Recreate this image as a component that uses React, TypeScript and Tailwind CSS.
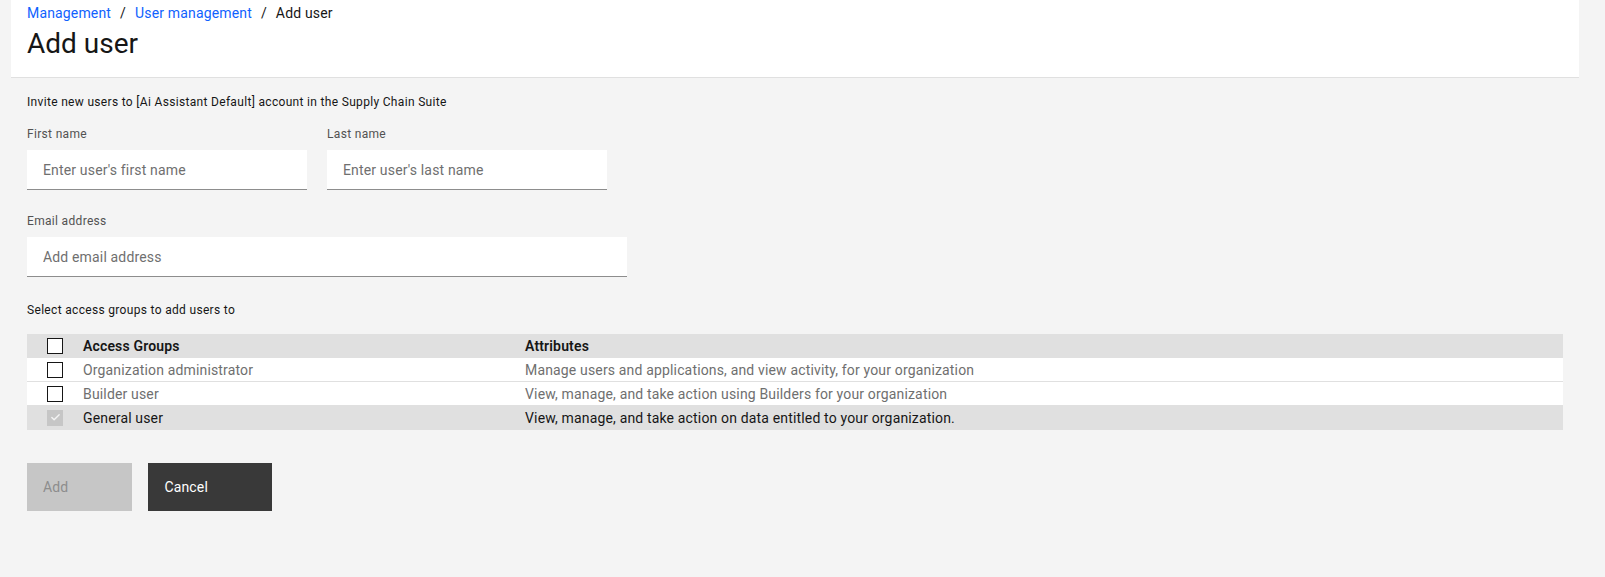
import { Check } from 'lucide-react';

const groups = [
  {
    name: 'Organization administrator',
    attrs: 'Manage users and applications, and view activity, for your organization',
    selected: false,
  },
  {
    name: 'Builder user',
    attrs: 'View, manage, and take action using Builders for your organization',
    selected: false,
  },
  {
    name: 'General user',
    attrs: 'View, manage, and take action on data entitled to your organization.',
    selected: true,
  },
];

function Box({ checked = false, disabled = false }: { checked?: boolean; disabled?: boolean }) {
  if (disabled && checked) {
    return (
      <span className="w-4 h-4 bg-[#c6c6c6] flex items-center justify-center">
        <Check size={11} strokeWidth={3} className="text-[#f4f4f4]" />
      </span>
    );
  }
  return <span className="w-4 h-4 border border-[#161616] bg-white block" />;
}

function Field({ label, placeholder, width }: { label: string; placeholder: string; width: string }) {
  return (
    <div className={`flex flex-col ${width}`}>
      <label className="text-xs leading-4 tracking-[0.32px] text-[#525252] mb-2">{label}</label>
      <input
        placeholder={placeholder}
        className="h-10 bg-white border-b border-[#8d8d8d] px-4 text-sm text-[#161616] placeholder:text-[#6f6f6f] outline-none tracking-[0.16px]"
      />
    </div>
  );
}

export default function App() {
  return (
    <div className="min-h-[577px] bg-[#f4f4f4] pl-[11px] pr-[26px] font-['Roboto','Liberation_Sans',sans-serif] text-[#161616]">
      {/* Page header */}
      <div className="bg-white border-b border-[#e0e0e0] px-4 pt-1 pb-[15px]">
        <nav className="flex items-center text-sm leading-[18px] tracking-[0.16px]">
          <a className="text-[#0f62fe]">Management</a>
          <span className="mx-[9px]">/</span>
          <a className="text-[#0f62fe]">User management</a>
          <span className="mx-[9px]">/</span>
          <span>Add user</span>
        </nav>
        <h1 className="mt-1 text-[28px] leading-9 font-normal">Add user</h1>
      </div>

      {/* Form */}
      <div className="px-4">
        <p className="mt-4 text-xs leading-4 tracking-[0.32px]">
          Invite new users to [Ai Assistant Default] account in the Supply Chain Suite
        </p>

        <div className="mt-4 flex gap-5">
          <Field label="First name" placeholder="Enter user's first name" width="w-[280px]" />
          <Field label="Last name" placeholder="Enter user's last name" width="w-[280px]" />
        </div>

        <div className="mt-[23px]">
          <Field label="Email address" placeholder="Add email address" width="w-[600px]" />
        </div>

        <p className="mt-[25px] text-xs leading-4 tracking-[0.32px]">Select access groups to add users to</p>

        {/* Access groups table */}
        <div className="mt-4 text-sm tracking-[0.16px]">
          <div className="flex items-center h-6 bg-[#e0e0e0] font-semibold">
            <div className="w-10 pl-5 flex items-center">
              <Box />
            </div>
            <div className="w-[442px] px-4">Access Groups</div>
            <div className="flex-1 px-4">Attributes</div>
          </div>
          {groups.map((g) => (
            <div
              key={g.name}
              className={`flex items-center h-6 border-b border-[#e0e0e0] ${
                g.selected ? 'bg-[#e0e0e0] text-[#161616]' : 'bg-white text-[#6f6f6f]'
              }`}
            >
              <div className="w-10 pl-5 flex items-center">
                <Box checked={g.selected} disabled={g.selected} />
              </div>
              <div className="w-[442px] px-4">{g.name}</div>
              <div className="flex-1 px-4">{g.attrs}</div>
            </div>
          ))}
        </div>

        {/* Actions */}
        <div className="mt-[33px] flex gap-4">
          <button
            disabled
            className="h-12 pl-4 pr-16 bg-[#c6c6c6] text-[#8d8d8d] text-sm text-left tracking-[0.16px] cursor-not-allowed"
          >
            Add
          </button>
          <button className="h-12 pl-4 pr-16 bg-[#393939] text-white text-sm text-left tracking-[0.16px]">
            Cancel
          </button>
        </div>
      </div>
    </div>
  );
}
